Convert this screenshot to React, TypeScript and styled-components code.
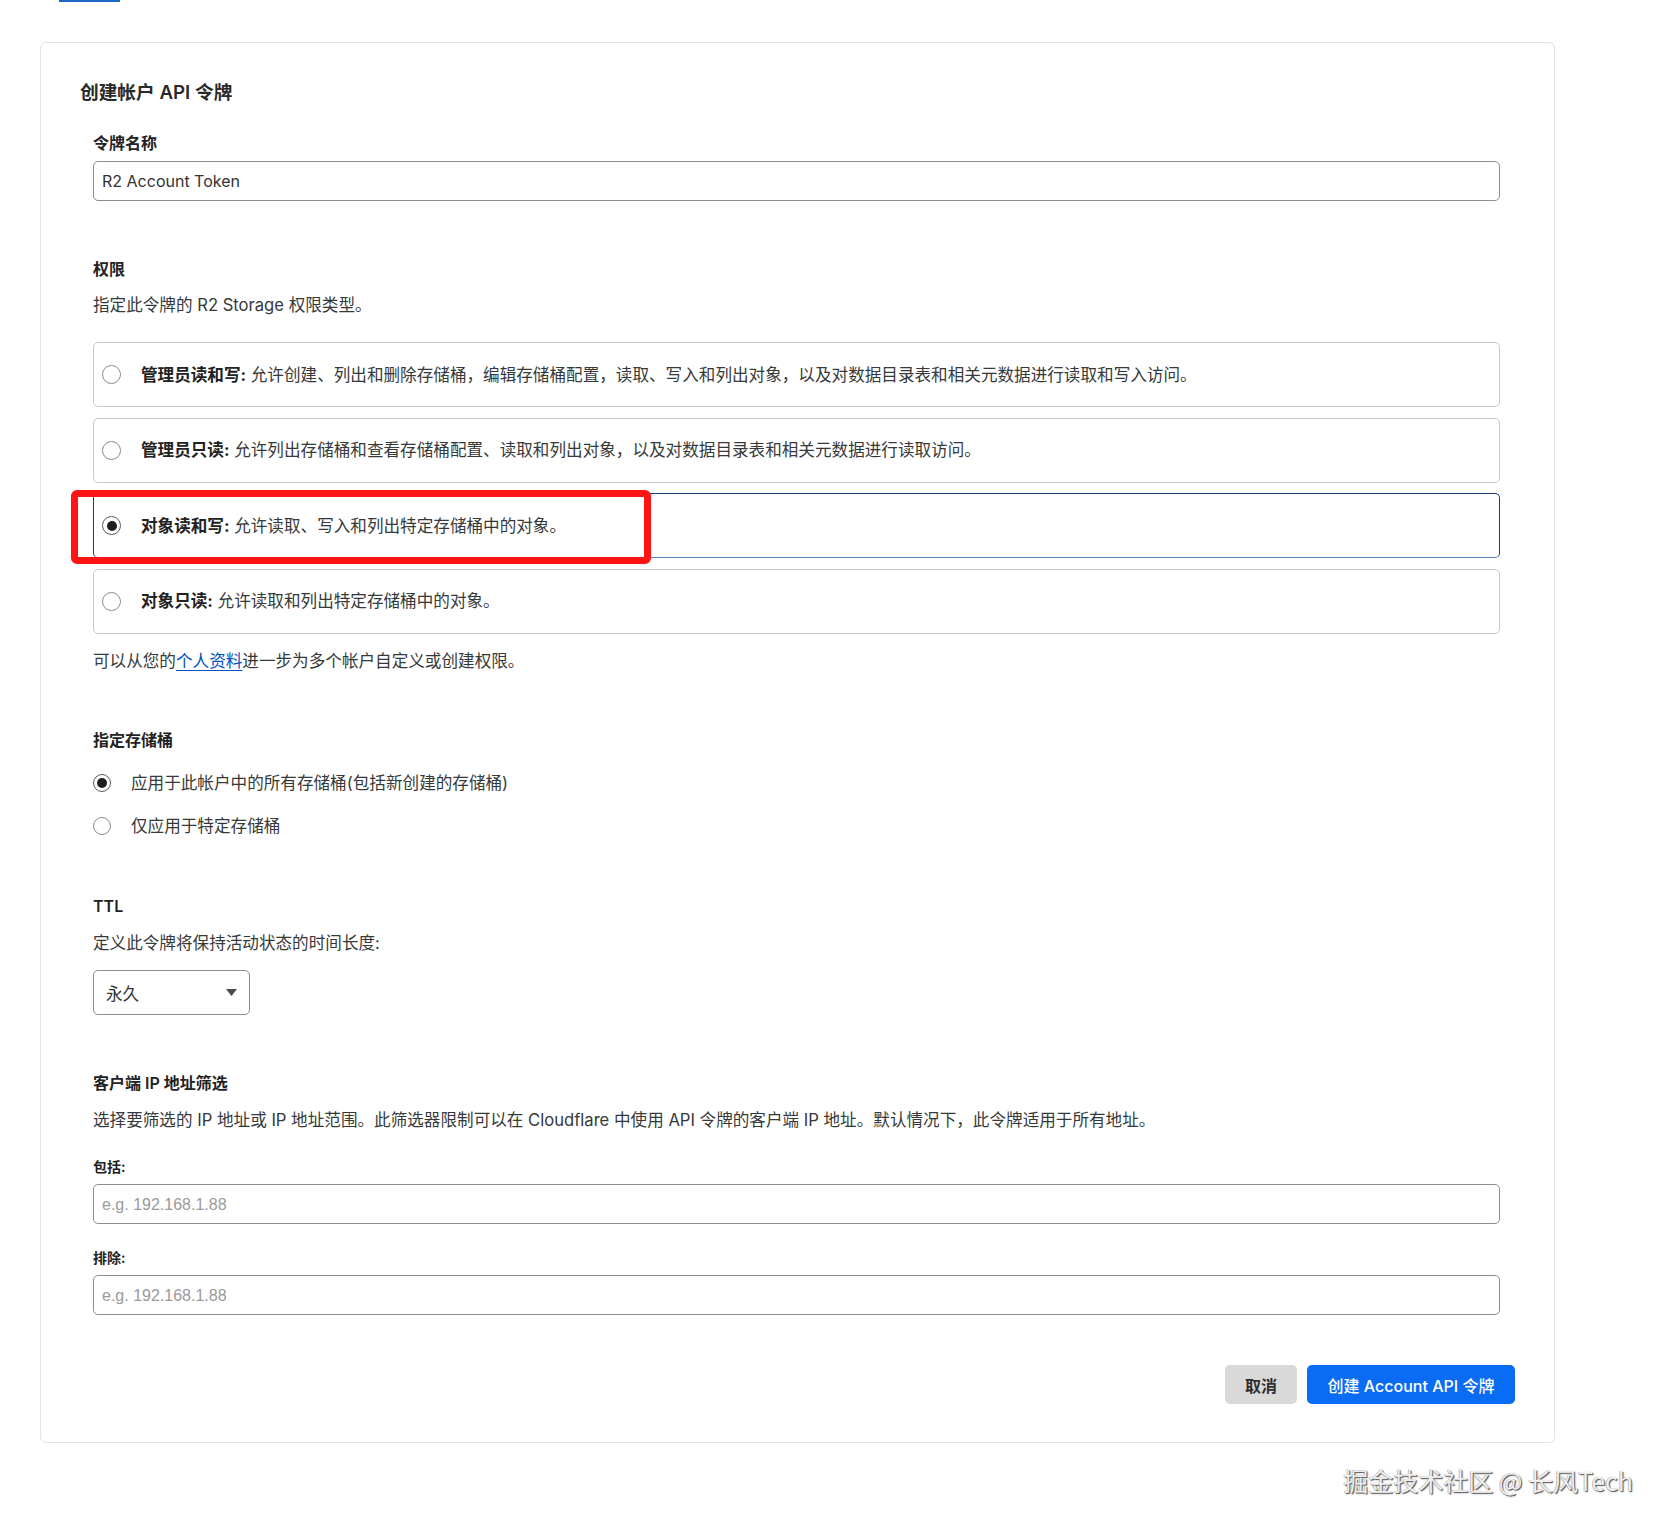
import React from 'react';
import styled, { createGlobalStyle, css } from 'styled-components';

const GlobalStyle = createGlobalStyle`
    body {
        margin: 0;
        background: #ffffff;
        font-family: Inter, 'Noto Sans CJK SC', sans-serif;
        color: #313131;
    }
    * {
        box-sizing: border-box;
    }
`;

interface PermissionOption {
    id: string;
    title: string;
    description: string;
}

const permissionOptions: PermissionOption[] = [
    {
        id: 'admin-rw',
        title: '管理员读和写:',
        description: '允许创建、列出和删除存储桶，编辑存储桶配置，读取、写入和列出对象，以及对数据目录表和相关元数据进行读取和写入访问。',
    },
    {
        id: 'admin-r',
        title: '管理员只读:',
        description: '允许列出存储桶和查看存储桶配置、读取和列出对象，以及对数据目录表和相关元数据进行读取访问。',
    },
    {
        id: 'object-rw',
        title: '对象读和写:',
        description: '允许读取、写入和列出特定存储桶中的对象。',
    },
    {
        id: 'object-r',
        title: '对象只读:',
        description: '允许读取和列出特定存储桶中的对象。',
    },
];

const bucketScopes = [
    { id: 'all', label: '应用于此帐户中的所有存储桶(包括新创建的存储桶)' },
    { id: 'specific', label: '仅应用于特定存储桶' },
];

const App: React.FunctionComponent = () => {
    const [permission, setPermission] = React.useState('object-rw');
    const [scope, setScope] = React.useState('all');

    return (
        <Style.Page>
            <GlobalStyle />
            <Style.TabMark />
            <Style.Card>
                <Style.CardTitle>创建帐户 API 令牌</Style.CardTitle>
                <Style.FormBody>
                    <Style.FieldLabel>令牌名称</Style.FieldLabel>
                    <Style.TextInput defaultValue="R2 Account Token" />

                    <Style.Section $gap={57}>
                        <Style.FieldLabel>权限</Style.FieldLabel>
                        <Style.Hint $gap={14}>指定此令牌的 R2 Storage 权限类型。</Style.Hint>
                        <Style.OptionList>
                            {permissionOptions.map((option) => (
                                <Style.OptionCard
                                    key={option.id}
                                    $selected={permission === option.id}
                                    onClick={() => setPermission(option.id)}
                                >
                                    <Style.Radio $checked={permission === option.id} />
                                    <Style.OptionText>
                                        <strong>{option.title}</strong> {option.description}
                                    </Style.OptionText>
                                    {option.id === 'object-rw' && <Style.Callout />}
                                </Style.OptionCard>
                            ))}
                        </Style.OptionList>
                        <Style.Hint $gap={16.5}>
                            可以从您的<Style.Link href="#profile">个人资料</Style.Link>进一步为多个帐户自定义或创建权限。
                        </Style.Hint>
                    </Style.Section>

                    <Style.Section $gap={57}>
                        <Style.FieldLabel>指定存储桶</Style.FieldLabel>
                        <Style.RadioGroup>
                            {bucketScopes.map((item) => (
                                <Style.RadioRow key={item.id} onClick={() => setScope(item.id)}>
                                    <Style.Radio $checked={scope === item.id} $small />
                                    <span>{item.label}</span>
                                </Style.RadioRow>
                            ))}
                        </Style.RadioGroup>
                    </Style.Section>

                    <Style.Section $gap={58}>
                        <Style.FieldLabel>TTL</Style.FieldLabel>
                        <Style.Hint $gap={15}>定义此令牌将保持活动状态的时间长度:</Style.Hint>
                        <Style.Select>
                            <span>永久</span>
                            <svg width="11" height="7" viewBox="0 0 11 7">
                                <polygon points="0,0 11,0 5.5,7" fill="#4a4a4a" />
                            </svg>
                        </Style.Select>
                    </Style.Section>

                    <Style.Section $gap={57}>
                        <Style.FieldLabel>客户端 IP 地址筛选</Style.FieldLabel>
                        <Style.Hint $gap={15}>
                            选择要筛选的 IP 地址或 IP 地址范围。此筛选器限制可以在 Cloudflare 中使用 API 令牌的客户端 IP 地址。默认情况下，此令牌适用于所有地址。
                        </Style.Hint>
                        <Style.SubLabel $gap={26}>包括:</Style.SubLabel>
                        <Style.TextInput placeholder="e.g. 192.168.1.88" />
                        <Style.SubLabel $gap={24}>排除:</Style.SubLabel>
                        <Style.TextInput placeholder="e.g. 192.168.1.88" />
                    </Style.Section>
                </Style.FormBody>

                <Style.Actions>
                    <Style.Button $variant="secondary">取消</Style.Button>
                    <Style.Button $variant="primary">创建 Account API 令牌</Style.Button>
                </Style.Actions>
            </Style.Card>
            <Style.Footer>
                <Style.Watermark>掘金技术社区 @ 长风Tech</Style.Watermark>
            </Style.Footer>
        </Style.Page>
    );
};

const Style = {
    Page: styled.div`
        width: 1672px;
        padding-bottom: 37px;
    `,
    // active tab underline above the card
    TabMark: styled.div`
        width: 61px;
        height: 2px;
        margin-left: 59px;
        background-color: #1a66c9;
    `,
    Card: styled.div`
        width: 1515px;
        margin: 40px 0 0 40px;
        padding: 37px 39px 38px 39px;
        border: 1px solid #e2e2e2;
        border-radius: 6px;
    `,
    CardTitle: styled.h2`
        margin: 0;
        font-size: 18.7px;
        line-height: 26px;
        font-weight: 600;
        color: #2a2a2a;
    `,
    FormBody: styled.div`
        margin-top: 26px;
        padding: 0 15px 0 13px;
    `,
    Section: styled.div<{ $gap: number }>`
        margin-top: ${(p) => p.$gap}px;
    `,
    FieldLabel: styled.div`
        font-size: 16px;
        line-height: 22px;
        font-weight: 600;
        color: #222222;
        margin-bottom: 7px;
    `,
    SubLabel: styled.div<{ $gap: number }>`
        margin-top: ${(p) => p.$gap}px;
        margin-bottom: 7px;
        font-size: 14px;
        line-height: 20px;
        font-weight: 600;
        color: #222222;
    `,
    // margin collapses with the label above, so $gap is the full distance
    Hint: styled.div<{ $gap: number }>`
        margin-top: ${(p) => p.$gap}px;
        font-size: 16.6px;
        line-height: 22px;
        color: #36393a;
    `,
    TextInput: styled.input`
        display: block;
        width: 100%;
        height: 40px;
        padding: 0 8px;
        border: 1px solid #8c8c8c;
        border-radius: 5px;
        font-family: Inter, 'Noto Sans CJK SC', sans-serif;
        font-size: 16px;
        color: #333333;
        outline: none;

        &::placeholder {
            font-family: 'Liberation Sans', sans-serif;
            font-size: 16px;
            color: #9a9a9a;
        }
    `,
    OptionList: styled.div`
        margin-top: 26px;
        display: flex;
        flex-direction: column;
        gap: 10.5px;
    `,
    OptionCard: styled.div<{ $selected: boolean }>`
        position: relative;
        height: 65px;
        display: flex;
        align-items: center;
        gap: 20px;
        padding-left: 8px;
        border: 1px solid #c8c8c8;
        border-radius: 5px;
        cursor: pointer;

        ${(p) =>
            p.$selected &&
            css`
                border-color: #163f7c #163f7c #5a82bd #163f7c;
            `}
    `,
    OptionText: styled.div`
        font-size: 16.6px;
        line-height: 22px;
        color: #36393a;
        white-space: nowrap;

        strong {
            font-weight: 700;
            color: #222222;
        }
    `,
    // red annotation frame drawn over the chosen option
    Callout: styled.div`
        position: absolute;
        left: -23px;
        top: -4px;
        width: 580px;
        height: 74px;
        border: 7px solid #ff1313;
        border-radius: 6px;
        pointer-events: none;
    `,
    Radio: styled.span<{ $checked: boolean; $small?: boolean }>`
        flex: none;
        position: relative;
        width: ${(p) => (p.$small ? 18 : 19)}px;
        height: ${(p) => (p.$small ? 18 : 19)}px;
        border-radius: 50%;
        border: 1px solid ${(p) => (p.$checked ? '#5a5a5a' : '#8a8a8a')};
        background: #ffffff;

        &::after {
            content: '';
            display: ${(p) => (p.$checked ? 'block' : 'none')};
            position: absolute;
            left: 50%;
            top: 50%;
            width: 10px;
            height: 10px;
            margin: -5px 0 0 -5px;
            border-radius: 50%;
            background: #1f1f1f;
        }
    `,
    Link: styled.a`
        color: #0051c3;
        text-decoration: underline;
        text-underline-offset: 3px;
    `,
    RadioGroup: styled.div`
        margin-top: 21px;
        display: flex;
        flex-direction: column;
        gap: 21px;
    `,
    RadioRow: styled.label`
        display: flex;
        align-items: center;
        gap: 20px;
        font-size: 16.6px;
        line-height: 22px;
        color: #36393a;
        cursor: pointer;
    `,
    Select: styled.div`
        margin-top: 16px;
        width: 157px;
        height: 45px;
        display: flex;
        align-items: center;
        justify-content: space-between;
        padding: 0 12px 0 12px;
        border: 1px solid #8c8c8c;
        border-radius: 5px;
        font-size: 16.6px;
        color: #333333;
    `,
    Actions: styled.div`
        margin-top: 50px;
        display: flex;
        justify-content: flex-end;
        gap: 10px;
    `,
    Button: styled.button<{ $variant: 'primary' | 'secondary' }>`
        height: 39px;
        padding: 0 17px;
        border: none;
        border-radius: 5px;
        font-family: Inter, 'Noto Sans CJK SC', sans-serif;
        font-size: 16px;
        cursor: pointer;

        ${(p) =>
            p.$variant === 'primary'
                ? css`
                      width: 208px;
                      background-color: #0a6cf5;
                      color: #ffffff;
                      font-weight: 500;
                  `
                : css`
                      width: 72px;
                      background-color: #d9d9d9;
                      color: #2e2e2e;
                      font-weight: 600;
                  `}
    `,
    Footer: styled.div`
        display: flex;
        justify-content: flex-end;
        padding-right: 39px;
        margin-top: 22px;
    `,
    Watermark: styled.div`
        font-family: 'Noto Sans CJK SC', sans-serif;
        font-size: 25px;
        line-height: 30px;
        color: #efefef;
        text-shadow: 1px 1px 0 #6a6a6a, -0.5px -0.5px 0 #9a9a9a, 1px 1px 2px #8a8a8a;
    `,
};

export default App;
